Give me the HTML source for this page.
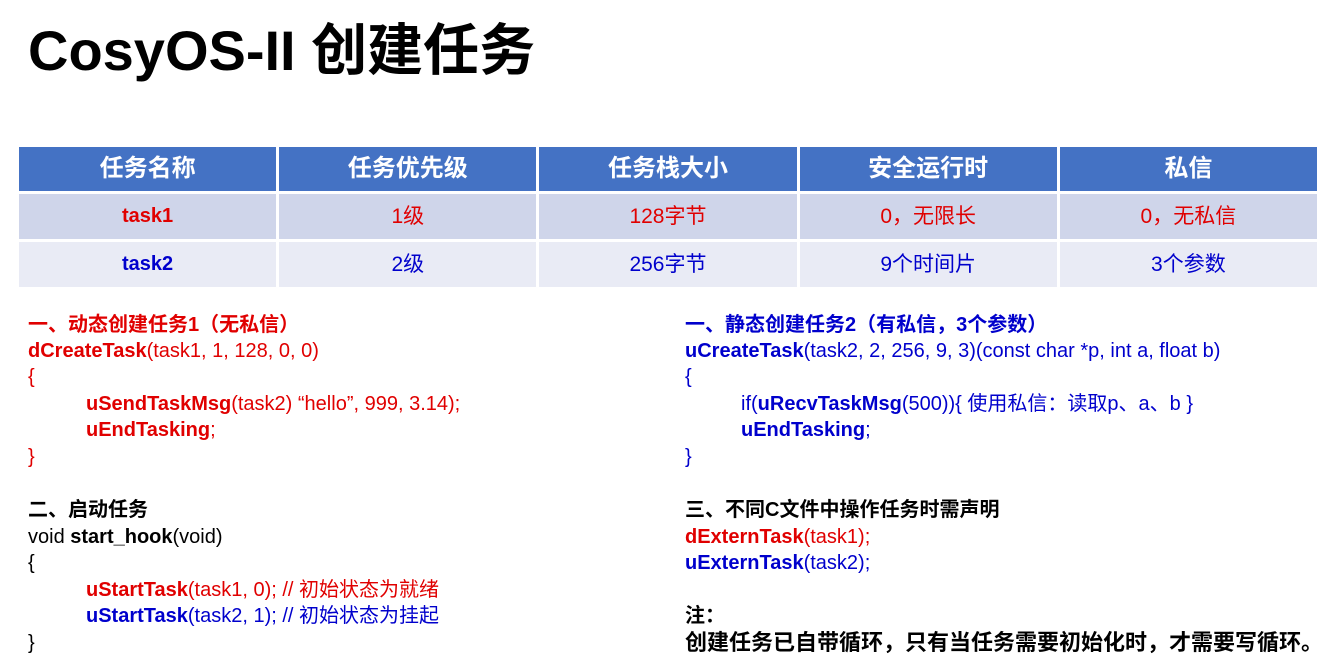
<!DOCTYPE html>
<html><head><meta charset="utf-8"><style>
body{margin:0;width:1318px;height:666px;background:#fff;position:relative;overflow:hidden;font-family:"Liberation Sans","Noto Sans CJK SC",sans-serif;}
.t{position:absolute;left:28px;top:6px;font-size:56px;font-weight:bold;color:#000;white-space:nowrap}
table{position:absolute;left:16px;top:144px;border-collapse:collapse;width:1304px;table-layout:fixed}
td{text-align:center;vertical-align:middle;border:3px solid #fff;font-size:21px;padding:0;line-height:45px;height:45px}
tr.h td{background:#4472C4;color:#fff;font-weight:bold;font-size:24px;line-height:44px;height:44px}
tr.a td{background:#CFD5EA;color:#e00000}
tr.b td{background:#E9EBF5;color:#0000cc}
td.n{font-weight:bold;font-size:20px}
.l{position:absolute;font-size:20px;line-height:26px;white-space:nowrap}
.r{color:#e00000}.u{color:#0000cc}.k{color:#000}
b{font-weight:bold}
</style></head><body>
<div class="t">CosyOS-II 创建任务</div>
<table>
<tr class="h"><td>任务名称</td><td>任务优先级</td><td>任务栈大小</td><td>安全运行时</td><td>私信</td></tr>
<tr class="a"><td class="n">task1</td><td>1级</td><td>128字节</td><td>0，无限长</td><td>0，无私信</td></tr>
<tr class="b"><td class="n">task2</td><td>2级</td><td>256字节</td><td>9个时间片</td><td>3个参数</td></tr>
</table>

<div class="l r" style="left:28px;top:312px"><b>一、动态创建任务1（无私信）</b></div>
<div class="l r" style="left:28px;top:338px"><b>dCreateTask</b>(task1, 1, 128, 0, 0)</div>
<div class="l r" style="left:28px;top:364px">{</div>
<div class="l r" style="left:86px;top:391px"><b>uSendTaskMsg</b>(task2) “hello”, 999, 3.14);</div>
<div class="l r" style="left:86px;top:417px"><b>uEndTasking</b>;</div>
<div class="l r" style="left:28px;top:444px">}</div>
<div class="l k" style="left:28px;top:497px"><b>二、启动任务</b></div>
<div class="l k" style="left:28px;top:524px">void <b>start_hook</b>(void)</div>
<div class="l k" style="left:28px;top:550px">{</div>
<div class="l r" style="left:86px;top:577px"><b>uStartTask</b>(task1, 0); // 初始状态为就绪</div>
<div class="l u" style="left:86px;top:603px"><b>uStartTask</b>(task2, 1); // 初始状态为挂起</div>
<div class="l k" style="left:28px;top:630px">}</div>

<div class="l u" style="left:685px;top:312px"><b>一、静态创建任务2（有私信，3个参数）</b></div>
<div class="l u" style="left:685px;top:338px"><b>uCreateTask</b>(task2, 2, 256, 9, 3)(const char *p, int a, float b)</div>
<div class="l u" style="left:685px;top:364px">{</div>
<div class="l u" style="left:741px;top:391px">if(<b>uRecvTaskMsg</b>(500)){ 使用私信：读取p、a、b }</div>
<div class="l u" style="left:741px;top:417px"><b>uEndTasking</b>;</div>
<div class="l u" style="left:685px;top:444px">}</div>
<div class="l k" style="left:685px;top:497px"><b>三、不同C文件中操作任务时需声明</b></div>
<div class="l r" style="left:685px;top:524px"><b>dExternTask</b>(task1);</div>
<div class="l u" style="left:685px;top:550px"><b>uExternTask</b>(task2);</div>
<div class="l k" style="left:685px;top:603px"><b>注：</b></div>
<div class="l k" style="left:685px;top:630px;font-size:22px"><b>创建任务已自带循环，只有当任务需要初始化时，才需要写循环。</b></div>
</body></html>
